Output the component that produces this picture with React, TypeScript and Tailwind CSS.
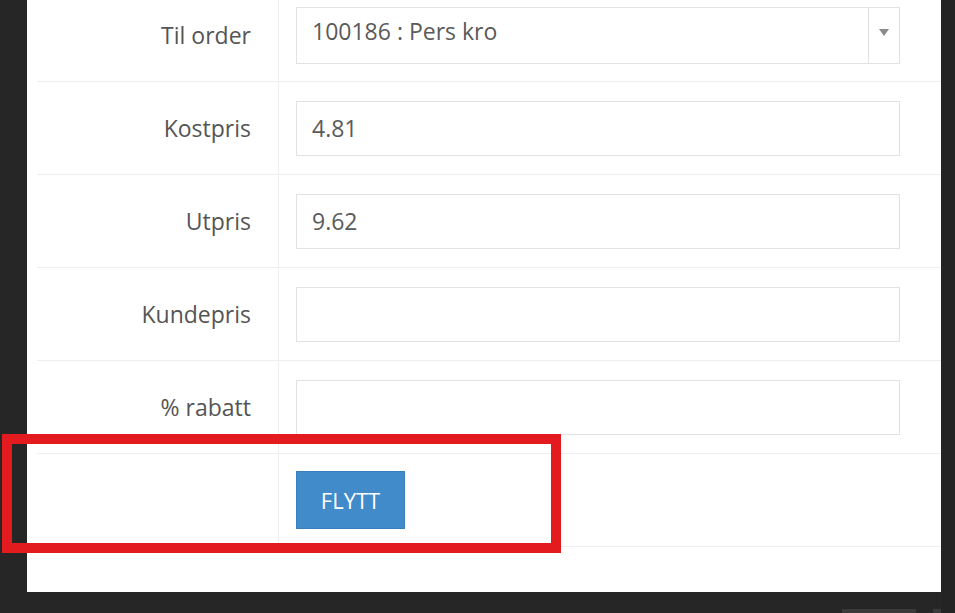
import React from "react";

const font = { fontFamily: '"Open Sans", "Liberation Sans", sans-serif' };

function Row({ label, children }: { label: string; children?: React.ReactNode }) {
  return (
    <div className="flex h-[93px] border-b border-[#eceeef]">
      <div className="flex w-[242px] shrink-0 items-center justify-end border-r border-[#eceeef] pr-[27px] text-[23px] text-[#555]">
        {label}
      </div>
      <div className="flex flex-1 items-center pl-[17px]">{children}</div>
    </div>
  );
}

function Input({ value }: { value?: string }) {
  return (
    <div className="flex h-[55px] w-[604px] items-center border border-[#e2e2e2] bg-white pl-[15px] text-[23px] text-[#5a5a5a]">
      {value}
    </div>
  );
}

export default function App() {
  return (
    <div className="relative h-[613px] w-[955px] overflow-hidden bg-[#262626]" style={font}>
      <div className="flex">
        <div className="w-[27px] shrink-0" />
        <div className="h-[592px] w-[914px] bg-white pl-[10px]">
          <div className="mt-[-11px]">
            <Row label="Til order">
              <div className="flex h-[57px] w-[604px] items-stretch border border-[#e2e2e2] bg-white text-[23px] text-[#5a5a5a]">
                <div className="flex flex-1 items-center pb-[8px] pl-[15px]">100186 : Pers kro</div>
                <div className="flex w-[31px] items-center justify-center border-l border-[#e2e2e2] pb-[6px]">
                  <svg width="10" height="7" viewBox="0 0 10 7">
                    <path d="M0 0 L10 0 L5 7 Z" fill="#8a8a8a" />
                  </svg>
                </div>
              </div>
            </Row>
            <Row label="Kostpris">
              <Input value="4.81" />
            </Row>
            <Row label="Utpris">
              <Input value="9.62" />
            </Row>
            <Row label="Kundepris">
              <Input />
            </Row>
            <Row label="% rabatt">
              <Input />
            </Row>
            <Row label="">
              <button className="flex h-[58px] w-[109px] items-center justify-center border border-[#3a7fbd] bg-[#428bca] text-[22px] text-white">
                FLYTT
              </button>
            </Row>
          </div>
        </div>
        <div className="h-[613px] w-[14px] shrink-0 bg-[#242424]" />
      </div>
      <div className="absolute left-[842px] top-[609px] h-[4px] w-[74px] bg-[#3a3a3a]" />
      <div className="absolute left-[933px] top-[609px] h-[4px] w-[8px] bg-[#3a3a3a]" />
      <div className="absolute left-[2px] top-[434px] h-[119px] w-[559px] border-[10px] border-[#e31b1e]" />
    </div>
  );
}
